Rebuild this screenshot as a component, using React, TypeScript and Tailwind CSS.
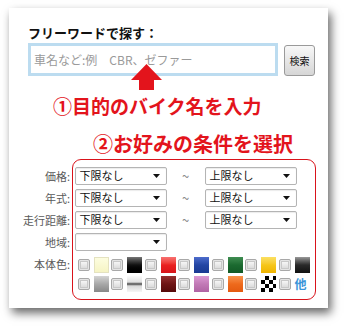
const jp = "font-['Noto_Sans_CJK_JP','Noto_Sans',sans-serif]";

function Select({ label }: { label: string }) {
  return (
    <div className="flex h-[18px] w-[92px] items-center justify-between rounded-[2px] border border-[#b4b4b4] bg-white pl-[4px] pr-[6px] shadow-[inset_0_1px_1px_rgba(0,0,0,0.08)]">
      <span className="text-[11px] leading-none text-[#111]">{label}</span>
      <svg width="7" height="4" viewBox="0 0 7 4">
        <path d="M0 0H7L3.5 4Z" fill="#111" />
      </svg>
    </div>
  );
}

function Check() {
  return (
    <div className="flex h-[12px] w-[12px] items-center justify-center rounded-[2px] border border-[#a8a8a8] bg-[#e4e4e4]">
      <div className="h-[8px] w-[8px] border border-[#c8c8c8] bg-gradient-to-b from-[#f6f6f6] to-[#dcdcdc]" />
    </div>
  );
}

const row1 = [
  "bg-gradient-to-b from-[#fdfde0] to-[#f6f4c4] border border-[#e4e2c0]",
  "bg-gradient-to-b from-[#777] via-[#111] to-[#000]",
  "bg-gradient-to-b from-[#f87070] via-[#ea2020] to-[#d8141a]",
  "bg-gradient-to-b from-[#4d6ccc] via-[#2446a4] to-[#1a3a92]",
  "bg-gradient-to-b from-[#3f8e52] via-[#1b6a30] to-[#125a26]",
  "bg-gradient-to-b from-[#fbe060] via-[#f6c618] to-[#efb400]",
  "bg-gradient-to-b from-[#9a9a9a] via-[#2a2a2a] to-[#111]",
];

const row2 = [
  "bg-gradient-to-b from-[#d4d4d4] via-[#a8a8a8] to-[#888]",
  "bg-[linear-gradient(#fafafa,#e0e0e0_38%,#4a4a4a_50%,#d8d8d8_62%,#f6f6f6)]",
  "bg-gradient-to-b from-[#963030] via-[#6e1414] to-[#560a0a]",
  "bg-gradient-to-b from-[#dc9ad4] via-[#c27ab6] to-[#b064a4]",
  "bg-gradient-to-b from-[#f8944a] via-[#ee6a1c] to-[#e45a10]",
  "bg-[conic-gradient(#000_25%,#fff_0_50%,#000_0_75%,#fff_0)] bg-[length:8px_8px]",
];

export default function App() {
  return (
    <div className={`h-[331px] w-[350px] bg-white pl-[9px] pt-[8px] ${jp}`}>
      <div className="relative flex h-[300px] w-[319px] flex-col bg-white shadow-[3px_5px_9px_rgba(0,0,0,0.6)]">
        <div className="ml-[19px] mt-[17px] text-[13px] font-bold leading-[16px] text-[#111]">
          フリーワードで探す：
        </div>
        <div className="ml-[19px] mt-[2px] flex items-start">
          <div className="flex h-[33px] w-[250px] items-center border-[3px] border-[#bcdcf0] bg-white pl-[3px]">
            <span className="text-[12px] text-[#9a9a9a]">車名など:例　CBR、ゼファー</span>
          </div>
          <button className="ml-[6px] mt-[2px] flex h-[31px] w-[31px] items-center justify-center rounded-[3px] border border-[#9a9a9a] bg-gradient-to-b from-[#f8f8f8] to-[#d6d6d6] text-[10px] text-[#111]">
            検索
          </button>
        </div>

        {/* arrow */}
        <svg className="absolute left-[122px] top-[56px]" width="31" height="27" viewBox="0 0 31 27">
          <path d="M15.5 0L31 16H23V26H8V16H0Z" fill="#e3141c" />
        </svg>

        <div className="ml-[44px] mt-[19px] text-[19px] font-bold leading-[22px] text-[#e3141c]">
          ①目的のバイク名を入力
        </div>
        <div className="ml-[84px] mt-[16px] text-[20px] font-bold leading-[22px] text-[#e3141c]">
          ②お好みの条件を選択
        </div>

        <div className="mt-[4px] flex">
          <div className="flex w-[61px] flex-col items-end gap-[4px] pt-[8px] text-[11px] text-[#5a5a5a]">
            <div className="flex h-[18px] items-center">価格:</div>
            <div className="flex h-[18px] items-center">年式:</div>
            <div className="flex h-[18px] items-center">走行距離:</div>
            <div className="flex h-[18px] items-center">地域:</div>
            <div className="mt-[1px] flex h-[16px] items-center">本体色:</div>
          </div>
          <div className="ml-[2px] flex h-[141px] w-[244px] flex-col gap-[4px] rounded-[9px] border-[1.5px] border-[#d9131b] pl-[1.5px] pt-[6.5px]">
            {[0, 1, 2].map((i) => (
              <div key={i} className="flex items-center">
                <Select label="下限なし" />
                <div className="w-[38px] text-center text-[13px] leading-none text-[#888]">~</div>
                <Select label="上限なし" />
              </div>
            ))}
            <Select label="" />
            <div className="ml-[3px] mt-[2px] flex flex-col gap-[3px]">
              <div className="flex items-center gap-[2.5px]">
                {row1.map((c, i) => (
                  <div key={i} className="flex items-center gap-[4px]">
                    <Check />
                    <div className={`h-[16px] w-[15px] ${c}`} />
                  </div>
                ))}
              </div>
              <div className="flex items-center gap-[2.5px]">
                {row2.map((c, i) => (
                  <div key={i} className="flex items-center gap-[4px]">
                    <Check />
                    <div className={`h-[16px] w-[15px] ${c}`} />
                  </div>
                ))}
                <div className="flex items-center gap-[4px]">
                  <Check />
                  <span className="text-[12px] font-bold leading-none text-[#3a94d8]">他</span>
                </div>
              </div>
            </div>
          </div>
        </div>
      </div>
    </div>
  );
}
